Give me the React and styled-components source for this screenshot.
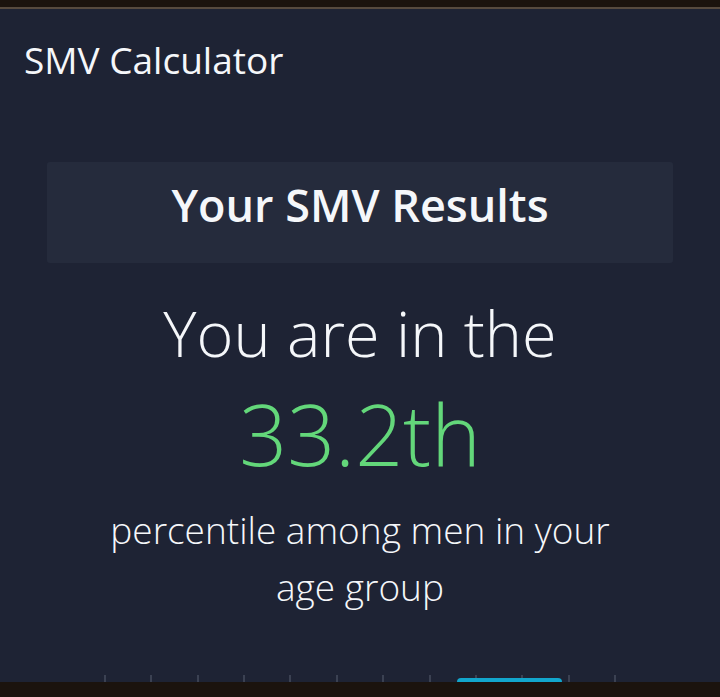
import React from "react";
import styled, { createGlobalStyle } from "styled-components";

const GlobalStyle = createGlobalStyle`
  html, body {
    margin: 0;
    padding: 0;
    background: #1e2334;
  }
  body {
    font-family: "Open Sans", "Noto Sans", Inter, sans-serif;
    color: #f5f7fa;
    -webkit-font-smoothing: antialiased;
  }
`;

const Screen = styled.div`
  width: 720px;
  height: 697px;
  display: flex;
  flex-direction: column;
  overflow: hidden;
  background: #1e2334;
`;

const StatusStrip = styled.div`
  height: 7px;
  flex: none;
  background: #1b130e;
  border-bottom: 2px solid #574a3f;
`;

const NavStrip = styled.div`
  height: 15px;
  flex: none;
  background: #1b130e;
`;

const Main = styled.main`
  flex: 1;
  display: flex;
  flex-direction: column;
  padding: 31px 24px 0;
  min-height: 0;
`;

const AppTitle = styled.h1`
  margin: 0;
  font-size: 37px;
  line-height: 40px;
  font-weight: 400;
`;

const ResultCard = styled.section`
  margin: 82px 23px 0;
  height: 101px;
  box-sizing: border-box;
  padding-top: 13px;
  background: #252b3c;
  border-radius: 3px;
  text-align: center;
`;

const CardHeading = styled.h2`
  margin: 0;
  font-size: 45px;
  line-height: 60px;
  font-weight: 600;
`;

const Lead = styled.p`
  margin: 32px 0 0;
  text-align: center;
  font-size: 63px;
  line-height: 76px;
  font-weight: 300;
`;

const Percentile = styled.p`
  margin: 17px 0 0;
  text-align: center;
  font-size: 84px;
  line-height: 92px;
  font-weight: 300;
  color: #63d77a;
`;

const Caption = styled.p`
  margin: 21px auto 0;
  max-width: 540px;
  text-align: center;
  font-size: 37px;
  line-height: 57px;
  font-weight: 300;
`;

const Ruler = styled.div`
  position: relative;
  margin-top: auto;
  height: 7px;
  padding: 0 80px;
  display: flex;
  justify-content: space-between;
`;

const Tick = styled.span`
  width: 2px;
  height: 7px;
  background: #3b4152;
`;

const Thumb = styled.div`
  position: absolute;
  left: ${(p) => p.$left}px;
  bottom: 0;
  width: ${(p) => p.$width}px;
  height: 4px;
  background: #12a6cc;
  border-radius: 4px 4px 0 0;
`;

const ticks = Array.from({ length: 12 }, (_, i) => i);

export default function App() {
  return (
    <>
      <GlobalStyle />
      <Screen>
        <StatusStrip />
        <Main>
          <AppTitle>SMV Calculator</AppTitle>
          <ResultCard>
            <CardHeading>Your SMV Results</CardHeading>
          </ResultCard>
          <Lead>You are in the</Lead>
          <Percentile>33.2th</Percentile>
          <Caption>percentile among men in your age group</Caption>
          <Ruler>
            {ticks.map((t) => (
              <Tick key={t} />
            ))}
            <Thumb $left={433} $width={105} />
          </Ruler>
        </Main>
        <NavStrip />
      </Screen>
    </>
  );
}
